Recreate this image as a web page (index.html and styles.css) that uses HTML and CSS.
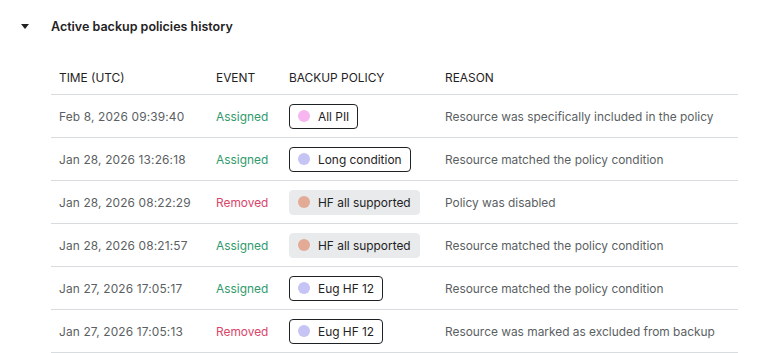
FILE: index.html
```html
<!DOCTYPE html>
<html lang="en">
<head>
    <meta charset="UTF-8">
    <title>Active backup policies history</title>
    <link rel="stylesheet" href="styles.css">
</head>
<body>
    <div class="section">
        <div class="section-header">
            <svg class="caret" width="8" height="5" viewBox="0 0 8 5">
                <path d="M0 0 L8 0 L4 5 Z" fill="#222"></path>
            </svg>
            <h3>Active backup policies history</h3>
        </div>

        <table class="history">
            <thead>
                <tr>
                    <th class="col-time">Time (UTC)</th>
                    <th class="col-event">Event</th>
                    <th class="col-policy">Backup policy</th>
                    <th>Reason</th>
                </tr>
            </thead>
            <tbody>
                <tr>
                    <td class="time">Feb 8, 2026 09:39:40</td>
                    <td class="event assigned">Assigned</td>
                    <td><span class="policy"><span class="dot pink"></span>All PII</span></td>
                    <td class="reason">Resource was specifically included in the policy</td>
                </tr>
                <tr>
                    <td class="time">Jan 28, 2026 13:26:18</td>
                    <td class="event assigned">Assigned</td>
                    <td><span class="policy"><span class="dot lavender"></span>Long condition</span></td>
                    <td class="reason">Resource matched the policy condition</td>
                </tr>
                <tr>
                    <td class="time">Jan 28, 2026 08:22:29</td>
                    <td class="event removed">Removed</td>
                    <td><span class="policy muted"><span class="dot peach"></span>HF all supported</span></td>
                    <td class="reason">Policy was disabled</td>
                </tr>
                <tr>
                    <td class="time">Jan 28, 2026 08:21:57</td>
                    <td class="event assigned">Assigned</td>
                    <td><span class="policy muted"><span class="dot peach"></span>HF all supported</span></td>
                    <td class="reason">Resource matched the policy condition</td>
                </tr>
                <tr>
                    <td class="time">Jan 27, 2026 17:05:17</td>
                    <td class="event assigned">Assigned</td>
                    <td><span class="policy"><span class="dot lavender"></span>Eug HF 12</span></td>
                    <td class="reason">Resource matched the policy condition</td>
                </tr>
                <tr>
                    <td class="time">Jan 27, 2026 17:05:13</td>
                    <td class="event removed">Removed</td>
                    <td><span class="policy"><span class="dot lavender"></span>Eug HF 12</span></td>
                    <td class="reason">Resource was marked as excluded from backup</td>
                </tr>
            </tbody>
        </table>
    </div>
</body>
</html>
```

FILE: styles.css
```css
body {
    margin: 0;
    background: #fff;
    font-family: Inter, "Noto Sans", sans-serif;
    color: #222;
}

.section {
    padding: 17px 21px 0;
}

.section-header {
    display: flex;
    align-items: center;
    gap: 22px;
    height: 18px;
}

.caret {
    display: block;
}

.section-header h3 {
    margin: 0;
    font-size: 12.5px;
    font-weight: 600;
    color: #1f2224;
}

.history {
    margin: 25px 0 0 30px;
    width: 687px;
    border-collapse: collapse;
    font-size: 11.9px;
}

.history th {
    text-align: left;
    font-weight: 400;
    text-transform: uppercase;
    color: #1f2224;
    padding: 0 8px;
    height: 34px;
    border-bottom: 1px solid #d9dcde;
}

.history td {
    padding: 0 8px;
    height: 42px;
    border-bottom: 1px solid #d9dcde;
    white-space: nowrap;
}

.col-time {
    width: 141px;
}

.col-event {
    width: 57px;
}

.col-policy {
    width: 140px;
}

.time {
    color: #5b5f63;
    letter-spacing: 0.15px;
}

.assigned {
    color: #2f9a6c;
}

.removed {
    color: #d9466a;
}

.reason {
    color: #5b5f63;
}

.policy {
    display: inline-flex;
    align-items: center;
    gap: 8px;
    height: 23px;
    padding: 0 8px;
    border: 1px solid #1f2224;
    border-radius: 4px;
    color: #1f2224;
}

.policy.muted {
    background: #e8eaeb;
    border-color: #e8eaeb;
}

.dot {
    width: 12px;
    height: 12px;
    border-radius: 50%;
}

.pink {
    background: #f7b6ef;
}

.lavender {
    background: #c6c3f5;
}

.peach {
    background: #e3ab96;
}
```
